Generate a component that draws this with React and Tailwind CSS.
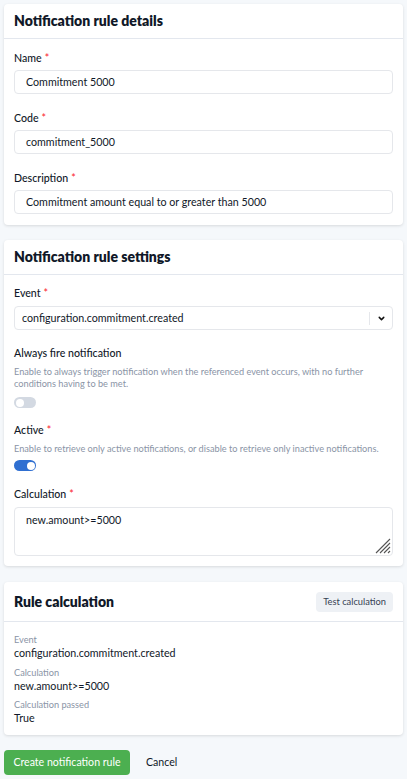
import React from "react";

const Req = () => <span className="text-red-500 ml-[3px]">*</span>;

const Label = ({ children, required = true, className = "" }) => (
  <label className={`block text-[10.6px] leading-[14px] font-medium text-gray-900 ${className}`}>
    {children}
    {required && <Req />}
  </label>
);

const Field = ({ label, value }) => (
  <div className="flex flex-col">
    <Label className="mb-[5px]">{label}</Label>
    <div className="h-[24px] border border-gray-200 rounded-[4px] px-[11px] flex items-center text-[10.7px] text-gray-900">
      {value}
    </div>
  </div>
);

const Toggle = ({ on }) => (
  <div
    className={`w-[22px] h-[11px] rounded-full flex items-center px-[1.5px] ${
      on ? "bg-[#2f6fd1] justify-end" : "bg-[#d3d9e2] justify-start"
    }`}
  >
    <div className="w-[8px] h-[8px] rounded-full bg-white" />
  </div>
);

const Hint = ({ children, className = "" }) => (
  <p className={`text-[9.2px] leading-[12px] text-[#8a94a6] ${className}`}>{children}</p>
);

const Card = ({ title, action, head = "h-[35px]", titleSize = "text-[14px]", body = "pt-[11px] pb-[10px]", children }) => (
  <div className="bg-white rounded-[4px] shadow-[0_1px_3px_rgba(0,0,0,0.12)]">
    <div className={`${head} px-[10px] flex items-center justify-between border-b border-[#e3e7ee]`}>
      <h2 className={`${titleSize} font-extrabold text-gray-900 leading-none`}>{title}</h2>
      {action}
    </div>
    <div className={`px-[10px] ${body}`}>{children}</div>
  </div>
);

export default function App() {
  return (
    <div
      className="min-h-screen bg-[#f5f8fb] px-[4px] pt-[4px] pb-[2px] flex flex-col"
      style={{ fontFamily: "Lato, 'Noto Sans', sans-serif" }}
    >
      <Card title="Notification rule details" body="pt-[12px] pb-[11px]">
        <div className="flex flex-col gap-[17px]">
          <Field label="Name" value="Commitment 5000" />
          <Field label="Code" value="commitment_5000" />
          <Field label="Description" value="Commitment amount equal to or greater than 5000" />
        </div>
      </Card>

      <div className="mt-[15px]">
        <Card title="Notification rule settings">
          <div className="flex flex-col">
            <Label className="mb-[6px]">Event</Label>
            <div className="h-[24px] border border-gray-200 rounded-[4px] flex items-center text-[10.7px] text-gray-900">
              <span className="flex-1 px-[7px]">configuration.commitment.created</span>
              <div className="w-px h-[13px] bg-gray-200" />
              <div className="w-[22px] flex items-center justify-center">
                <svg width="9" height="9" viewBox="0 0 24 24" fill="none" stroke="#111" strokeWidth="4" strokeLinecap="round" strokeLinejoin="round">
                  <path d="M6 9l6 6 6-6" />
                </svg>
              </div>
            </div>

            <Label required={false} className="mt-[16px]">Always fire notification</Label>
            <Hint className="mt-[6px]">
              Enable to always trigger notification when the referenced event occurs, with no further conditions having to be met.
            </Hint>
            <div className="mt-[7px]">
              <Toggle on={false} />
            </div>

            <Label className="mt-[15px]">Active</Label>
            <Hint className="mt-[6px]">
              Enable to retrieve only active notifications, or disable to retrieve only inactive notifications.
            </Hint>
            <div className="mt-[5px]">
              <Toggle on />
            </div>

            <Label className="mt-[16px] mb-[6px]">Calculation</Label>
            <div className="relative h-[49px] border border-gray-200 rounded-[4px] px-[11px] pt-[4px] text-[10.7px] leading-[16px] text-gray-900">
              new.amount&gt;=5000
              <svg className="absolute right-[1px] bottom-[1px]" width="18" height="18" viewBox="0 0 18 18" stroke="#555" strokeWidth="1.1">
                <path d="M17 3L3 17M17 7L7 17M17 11L11 17M17 15L15 17" />
              </svg>
            </div>
          </div>
        </Card>
      </div>

      <div className="mt-[16px]">
        <Card
          title="Rule calculation"
          head="h-[40px]"
          titleSize="text-[14px]"
          body="pt-[12px] pb-[10px]"
          action={
            <button className="h-[20px] px-[7px] rounded-[4px] bg-[#eef1f5] text-[9.3px] text-gray-700">
              Test calculation
            </button>
          }
        >
          <div className="flex flex-col">
            <Hint>Event</Hint>
            <span className="text-[10.7px] text-gray-900 leading-[14px]">configuration.commitment.created</span>
            <Hint className="mt-[7px]">Calculation</Hint>
            <span className="text-[10.7px] text-gray-900 leading-[14px]">new.amount&gt;=5000</span>
            <Hint className="mt-[6px]">Calculation passed</Hint>
            <span className="text-[10.7px] text-gray-900 leading-[14px]">True</span>
          </div>
        </Card>
      </div>

      <div className="mt-[15px] flex items-center gap-[16px]">
        <button className="h-[25px] w-[126px] rounded-[4px] bg-[#4caf50] text-white text-[10.6px] leading-none">
          Create notification rule
        </button>
        <button className="text-[10.6px] leading-none text-gray-900">Cancel</button>
      </div>
    </div>
  );
}
